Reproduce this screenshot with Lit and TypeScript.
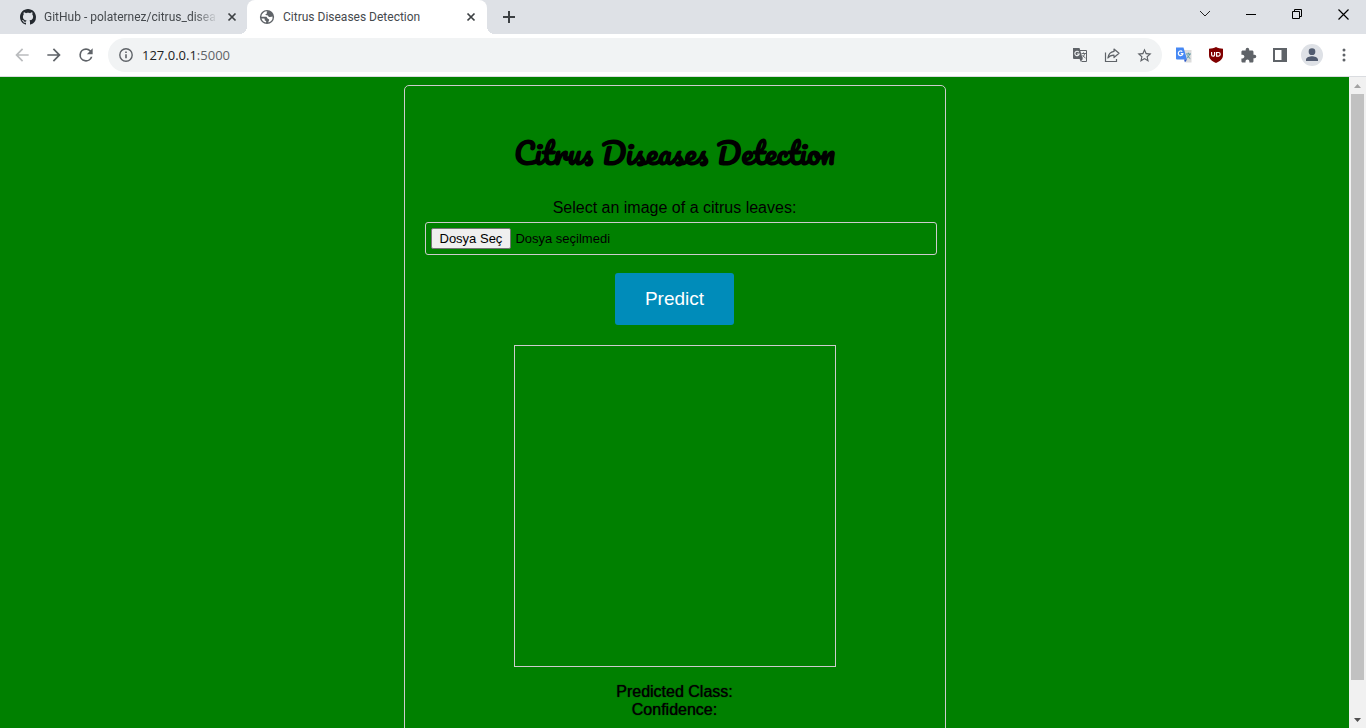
import { LitElement, html, css, svg } from "lit";
import { customElement, state, query } from "lit/decorators.js";

const closeIcon = svg`<svg width="10" height="10" viewBox="0 0 10 10"><path d="M1.5 1.5l7 7M8.5 1.5l-7 7" stroke="#3c4043" stroke-width="1.7" fill="none"/></svg>`;

@customElement("browser-tabs")
class BrowserTabs extends LitElement {
  static styles = css`
    :host {
      display: flex;
      height: 34px;
      background: #dee1e6;
      font-family: "Segoe UI", Roboto, sans-serif;
      font-size: 12px;
      color: #45494d;
    }
    button {
      display: flex;
      align-items: center;
      justify-content: center;
      padding: 0;
      border: 0;
      background: none;
      font: inherit;
      color: inherit;
    }
    svg {
      display: block;
      flex: none;
    }
    .tab {
      position: relative;
      display: flex;
      align-items: center;
      box-sizing: border-box;
      gap: 8px;
      padding: 0 10px 0 12px;
      width: 240px;
    }
    .idle {
      width: 247px;
      padding: 0 9px 0 20px;
    }
    .active {
      background: #fff;
      border-radius: 8px 8px 0 0;
    }
    .active::before,
    .active::after {
      content: "";
      position: absolute;
      bottom: 0;
      width: 8px;
      height: 8px;
    }
    .active::before {
      right: 100%;
      background: radial-gradient(circle at 0 0, transparent 8px, #fff 8px);
    }
    .active::after {
      left: 100%;
      background: radial-gradient(circle at 100% 0, transparent 8px, #fff 8px);
    }
    .title {
      flex: 1;
      min-width: 0;
      overflow: hidden;
      white-space: nowrap;
      text-align: left;
    }
    .fade {
      -webkit-mask-image: linear-gradient(to left, transparent, #000 24px);
      mask-image: linear-gradient(to left, transparent, #000 24px);
    }
    .close {
      width: 12px;
      height: 16px;
    }
    .new {
      width: 28px;
      margin-left: 8px;
    }
    .controls {
      display: flex;
      height: 28px;
      margin-left: auto;
    }
    .controls button {
      width: 46px;
    }
  `;

  render() {
    return html`
      <div class="tab idle">
        <svg width="16" height="16" viewBox="0 0 16 16"><path fill="#24292f" d="M8 0C3.58 0 0 3.58 0 8c0 3.54 2.29 6.53 5.47 7.59.4.07.55-.17.55-.38 0-.19-.01-.82-.01-1.49-2.01.37-2.53-.49-2.69-.94-.09-.23-.48-.94-.82-1.13-.28-.15-.68-.52-.01-.53.63-.01 1.08.58 1.23.82.72 1.21 1.87.87 2.33.66.07-.52.28-.87.51-1.07-1.78-.2-3.64-.89-3.64-3.95 0-.87.31-1.59.82-2.15-.08-.2-.36-1.02.08-2.12 0 0 .67-.21 2.2.82.64-.18 1.32-.27 2-.27s1.36.09 2 .27c1.53-1.04 2.2-.82 2.2-.82.44 1.1.16 1.92.08 2.12.51.56.82 1.27.82 2.15 0 3.07-1.87 3.75-3.65 3.95.29.25.54.73.54 1.48 0 1.07-.01 1.93-.01 2.2 0 .21.15.46.55.38A8.01 8.01 0 0 0 16 8c0-4.42-3.58-8-8-8z"/></svg>
        <span class="title fade">GitHub - polaternez/citrus_disea</span>
        <button class="close" aria-label="Close tab">${closeIcon}</button>
      </div>
      <div class="tab active">
        <svg width="16" height="16" viewBox="0 0 16 16"><circle cx="8" cy="8" r="7.1" fill="#5f6368"/><path fill="#fff" d="M8.7 2.3c-1 .2-1.2.9-.8 1.5.3.6-.2 1.1-.9 1.2-.8.1-.7.8-.1 1 .8.3 1.900 0 2.300.9.3.8.8 1.100 1.600 1.100.7 0 1.400-.3 2.800-.5a5.700 5.700 0 0 1-4 5.900c-.3-.6 0-1.300.4-1.800.5-.8.1-1.500-.7-1.700-.9-.2-1.100-.6-1.300-1.300-.3-.8-1-.8-1.800-.8H2.300a5.700 5.700 0 0 1 6.400-5.500zM2.500 9.500h2.300c.8 0 1 .6.9 1.200-.1.700.4 1 1 1.100.7.2.5 1 .3 1.700a5.700 5.700 0 0 1-4.500-4z"/></svg>
        <span class="title">Citrus Diseases Detection</span>
        <button class="close" aria-label="Close tab">${closeIcon}</button>
      </div>
      <button class="new" aria-label="New tab">
        <svg width="12" height="12" viewBox="0 0 12 12"><path d="M6 0v12M0 6h12" stroke="#3c4043" stroke-width="2"/></svg>
      </button>
      <div class="controls">
        <button aria-label="Search tabs"><svg width="12" height="8" viewBox="0 0 12 8"><path d="M1 1l5 5 5-5" stroke="#222" fill="none"/></svg></button>
        <button aria-label="Minimize"><svg width="10" height="10" viewBox="0 0 10 10"><path d="M0 5.500h10" stroke="#000"/></svg></button>
        <button aria-label="Restore"><svg width="10" height="10" viewBox="0 0 10 10"><path d="M.5 2.500h7v7h-7zM2.500 2.500v-2h7v7h-2" stroke="#000" fill="none"/></svg></button>
        <button aria-label="Close"><svg width="11" height="11" viewBox="0 0 11 11"><path d="M.5.5l10 10M10.500.5l-10 10" stroke="#000" stroke-width="1.200"/></svg></button>
      </div>
    `;
  }
}

@customElement("browser-toolbar")
class BrowserToolbar extends LitElement {
  static styles = css`
    :host {
      display: flex;
      align-items: center;
      box-sizing: border-box;
      height: 43px;
      padding: 0 6px;
      border-bottom: 1px solid #dadce0;
      background: #fff;
    }
    button {
      display: flex;
      align-items: center;
      justify-content: center;
      width: 32px;
      height: 32px;
      padding: 0;
      border: 0;
      background: none;
      flex: none;
    }
    svg {
      display: block;
      flex: none;
    }
    .omnibox {
      display: flex;
      flex: 1;
      min-width: 0;
      align-items: center;
      height: 34px;
      margin: 0 6px;
      padding: 0 2px 0 10px;
      border-radius: 17px;
      background: #f1f3f4;
    }
    .address {
      flex: 1;
      margin-left: 8px;
      font: 13px/20px "Segoe UI", "Open Sans", sans-serif;
      color: #202124;
      white-space: nowrap;
    }
    .port {
      color: #5f6368;
    }
    .avatar {
      width: 22px;
      height: 22px;
      margin: 0 5px;
      border-radius: 50%;
      background: #dee1e6;
    }
  `;

  render() {
    return html`
      <button aria-label="Back"><svg width="20" height="20" viewBox="0 0 24 24"><path fill="#babcbe" d="M20 11H7.830l5.590-5.590L12 4l-8 8 8 8 1.410-1.410L7.830 13H20v-2z"/></svg></button>
      <button aria-label="Forward"><svg width="20" height="20" viewBox="0 0 24 24"><path fill="#5f6368" d="M12 4l-1.410 1.410L16.170 11H4v2h12.170l-5.580 5.590L12 20l8-8z"/></svg></button>
      <button aria-label="Reload"><svg width="20" height="20" viewBox="0 0 24 24"><path fill="#5f6368" d="M17.650 6.350A7.960 7.960 0 0 0 12 4a8 8 0 1 0 7.730 10h-2.080A6 6 0 1 1 12 6c1.660 0 3.140.69 4.220 1.780L13 11h7V4l-2.350 2.350z"/></svg></button>
      <div class="omnibox">
        <svg width="16" height="16" viewBox="0 0 16 16"><circle cx="8" cy="8" r="6.200" fill="none" stroke="#5f6368" stroke-width="1.400"/><path d="M8 7.200v4M8 4.600v1.500" stroke="#5f6368" stroke-width="1.600"/></svg>
        <span class="address">127.0.0.1<span class="port">:5000</span></span>
        <button aria-label="Translate"><svg width="16" height="16" viewBox="0 0 16 16"><path d="M7.500 3.500h7v11h-5" fill="none" stroke="#5f6368"/><path d="M1 1h6.500l3.300 11H2a1 1 0 0 1-1-1z" fill="#5f6368"/><path d="M7.600 12h3.200l-2 2.800z" fill="#5f6368"/><path d="M6.800 5.100A2.200 2.200 0 1 0 7.200 7H5" fill="none" stroke="#f1f3f4" stroke-width="1.100"/><path d="M9.500 6.500H14M12.800 6.500q-.7 2.500-2.400 4M10.600 8q1 2 2.900 3M11.500 5.400v1" fill="none" stroke="#5f6368" stroke-width=".9"/></svg></button>
        <button aria-label="Share"><svg width="16" height="16" viewBox="0 0 16 16"><path d="M1.500 5.500v9h11V12" fill="none" stroke="#5f6368" stroke-width="1.200"/><path d="M10 2l5 4.300-5 4.200V8.200C7.300 8.200 5.300 9 3.900 11c.5-3.500 2.600-6.100 6.100-6.600z" fill="none" stroke="#5f6368" stroke-width="1.200" stroke-linejoin="round"/></svg></button>
        <button aria-label="Bookmark"><svg width="17" height="17" viewBox="0 0 24 24"><path fill="#5f6368" d="M22 9.240l-7.190-.62L12 2 9.190 8.630 2 9.240l5.460 4.730L5.820 21 12 17.270 18.180 21l-1.630-7.030L22 9.240zM12 15.400l-3.760 2.270 1-4.280-3.320-2.880 4.380-.38L12 6.100l1.710 4.040 4.380.38-3.320 2.880 1 4.280L12 15.400z"/></svg></button>
      </div>
      <button aria-label="Google Translate"><svg width="16" height="16" viewBox="0 0 16 16"><path d="M6 3h9.500v12.500H10z" fill="#dcdcdc"/><path d="M0 .5h7.500L11 12.500H1a1 1 0 0 1-1-1z" fill="#4688f4"/><path d="M8 12.500h3l-2 3z" fill="#2a56c6"/><path d="M6.300 4.700A2.300 2.300 0 1 0 6.900 6.600H4.800" fill="none" stroke="#fff" stroke-width="1.200"/><path d="M10 7h5M13.700 7q-.8 2.700-2.600 4.300M11.300 8.400q1 2 3 3.200M12.400 5.700V7" fill="none" stroke="#5a9aa5" stroke-width="1"/></svg></button>
      <button aria-label="uBlock Origin"><svg width="16" height="16" viewBox="0 0 16 16"><path d="M8 0c2 1.300 4.300 1.600 7 1.700V8c0 4-2.800 6-7 8-4.200-2-7-4-7-8V1.700C3.700 1.600 6 1.300 8 0z" fill="#800000"/><path d="M3.600 5v2.700a1.500 1.500 0 0 0 3 0V5" fill="none" stroke="#fff" stroke-width="1.200"/><path d="M8.600 5.500h1.800a1.800 1.800 0 0 1 0 3.600H8.600z" fill="none" stroke="#fff" stroke-width="1.200"/></svg></button>
      <button aria-label="Extensions"><svg width="17" height="17" viewBox="0 0 24 24"><path fill="#5f6368" d="M20.500 11H19V7c0-1.100-.9-2-2-2h-4V3.500a2.500 2.500 0 0 0-5 0V5H4c-1.100 0-1.990.9-1.990 2v3.800H3.500c1.490 0 2.700 1.210 2.700 2.700s-1.210 2.700-2.700 2.700H2V20c0 1.100.9 2 2 2h3.800v-1.500c0-1.490 1.210-2.700 2.700-2.700s2.700 1.210 2.700 2.700V22H17c1.100 0 2-.9 2-2v-4h1.500a2.500 2.500 0 0 0 0-5z"/></svg></button>
      <button aria-label="Side panel"><svg width="14" height="14" viewBox="0 0 14 14"><path fill="#5f6368" fill-rule="evenodd" d="M0 0h14v14H0zM2 2v10h6.500V2z"/></svg></button>
      <button class="avatar" aria-label="Profile"><svg width="16" height="16" viewBox="0 0 24 24"><path fill="#525c70" d="M12 12a5 5 0 1 0 0-10 5 5 0 0 0 0 10zm0 2c-3.300 0-9 1.700-9 5v2h18v-2c0-3.300-5.700-5-9-5z"/></svg></button>
      <button aria-label="Menu"><svg width="4" height="14" viewBox="0 0 4 14"><g fill="#5f6368"><circle cx="2" cy="2" r="1.500"/><circle cx="2" cy="7" r="1.500"/><circle cx="2" cy="12" r="1.500"/></g></svg></button>
    `;
  }
}

@customElement("citrus-page")
class CitrusPage extends LitElement {
  static styles = css`
    :host {
      display: block;
      box-sizing: border-box;
      padding: 8px;
      background: #008000;
      color: #000;
      font: 16px/18px Arial, "Liberation Sans", sans-serif;
      text-align: center;
    }
    .card {
      max-width: 500px;
      margin: 0 auto;
      padding: 20px;
      border: 1px solid #ccc;
      border-radius: 5px;
    }
    h1 {
      margin: 20px 0;
      font: bold 30px/53px Pacifico, cursive;
      white-space: nowrap;
    }
    label {
      display: block;
      margin-bottom: 5px;
    }
    .file {
      position: relative;
      display: flex;
      align-items: center;
      gap: 4px;
      width: 100%;
      padding: 5px;
      border: 1px solid #ccc;
      border-radius: 3px;
      font-size: 13px;
    }
    .file input {
      position: absolute;
      inset: 0;
      width: 100%;
      opacity: 0;
    }
    .choose {
      box-sizing: border-box;
      height: 21px;
      padding: 0 8px;
      border: 1px solid #767676;
      border-radius: 2px;
      background: #efefef;
      color: #000;
      font: inherit;
    }
    .predict {
      margin: 18px 0 20px;
      padding: 15px 30px;
      border: 0;
      border-radius: 3px;
      background: #008cba;
      color: #fff;
      font: 19px/22px Arial, "Liberation Sans", sans-serif;
    }
    .preview {
      width: 320px;
      height: 320px;
      margin: 0 auto 16px;
      border: 1px solid #ccc;
    }
    .result {
      text-shadow: 0 0 1px #000;
    }
  `;

  @state() private fileName = "Dosya seçilmedi";
  @query("#image") private input!: HTMLInputElement;

  private onChange() {
    this.fileName = this.input.files?.[0]?.name ?? "Dosya seçilmedi";
  }

  render() {
    return html`
      <main class="card">
        <h1>Citrus Diseases Detection</h1>
        <label for="image">Select an image of a citrus leaves:</label>
        <div class="file">
          <button class="choose" @click=${() => this.input.click()}>Dosya Seç</button>
          <span>${this.fileName}</span>
          <input id="image" type="file" accept="image/*" @change=${this.onChange} />
        </div>
        <button class="predict">Predict</button>
        <div class="preview"></div>
        <div class="result">Predicted Class:</div>
        <div class="result">Confidence:</div>
      </main>
    `;
  }
}

@customElement("app-root")
class AppRoot extends LitElement {
  static styles = css`
    :host {
      display: flex;
      flex-direction: column;
      height: 100vh;
      overflow: hidden;
    }
    browser-tabs,
    browser-toolbar {
      flex: none;
    }
    .viewport {
      display: flex;
      flex: 1;
      min-height: 0;
    }
    .content {
      flex: 1;
      min-width: 0;
      overflow: hidden;
      background: #008000;
    }
    .scrollbar {
      display: flex;
      flex-direction: column;
      align-items: center;
      width: 17px;
      background: #f1f1f1;
    }
    .arrow {
      display: flex;
      align-items: center;
      height: 17px;
    }
    .track {
      flex: 1;
      width: 13px;
    }
    .thumb {
      height: 95%;
      background: #c1c1c1;
    }
  `;

  render() {
    return html`
      <browser-tabs></browser-tabs>
      <browser-toolbar></browser-toolbar>
      <div class="viewport">
        <div class="content"><citrus-page></citrus-page></div>
        <div class="scrollbar">
          <span class="arrow"><svg width="7" height="4" viewBox="0 0 7 4"><path d="M0 4L3.500 0 7 4z" fill="#a3a3a3"/></svg></span>
          <div class="track"><div class="thumb"></div></div>
          <span class="arrow"><svg width="7" height="4" viewBox="0 0 7 4"><path d="M0 0h7L3.500 4z" fill="#505050"/></svg></span>
        </div>
      </div>
    `;
  }
}
